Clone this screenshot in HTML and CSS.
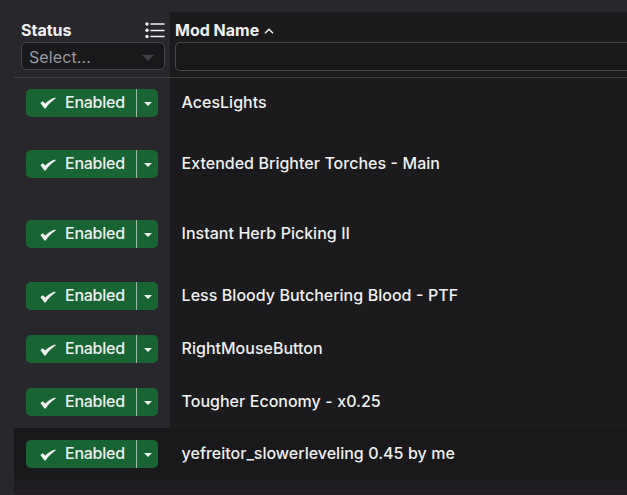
FILE: index.html
```html
<!DOCTYPE html>
<html lang="en">
<head>
<meta charset="utf-8">
<title>Mods</title>
<link rel="stylesheet" href="styles.css">
</head>
<body>
<svg width="0" height="0" class="sprites">
  <symbol id="check" viewBox="0 0 16 12"><path d="M.4 5.9 2.7 4.3 5.4 6.6C8 4 11.2 1.7 15.1.6L15.7 1.5C11.4 4.2 8.3 7.5 5.7 11.4H4.4Z" fill="currentColor"/></symbol>
  <symbol id="caret" viewBox="0 0 8 4"><path d="M0 0H8L4 4Z" fill="currentColor"/></symbol>
</svg>
<main class="table">
  <header class="head">
    <div class="head-cell status">
      <div class="title"><span>Status</span>
        <svg class="list" viewBox="0 0 20 16"><g fill="currentColor"><circle cx="2" cy="2" r="1.7"/><circle cx="2" cy="8.2" r="1.7"/><circle cx="2" cy="14.4" r="1.7"/></g><path d="M6 2H19M6 8.4H19M6 14.6H19" stroke="currentColor" stroke-width="1.5" stroke-linecap="round"/></svg>
      </div>
      <div class="field"><span>Select...</span><svg class="arrow" viewBox="0 0 12 6"><path d="M0 0H12L6 6Z" fill="currentColor"/></svg></div>
    </div>
    <div class="head-cell name">
      <div class="title"><span>Mod Name</span><svg class="sort" viewBox="0 0 10 6"><path d="M1 5.3 5 1.3 9 5.3" fill="none" stroke="currentColor" stroke-width="1.5"/></svg></div>
      <div class="field open"></div>
    </div>
  </header>
  <div class="row first"><div class="status"><div class="btn"><span class="main"><svg class="check"><use href="#check"/></svg>Enabled</span><span class="drop"><svg class="caret"><use href="#caret"/></svg></span></div></div><div class="name">AcesLights</div></div>
  <div class="row tall"><div class="status"><div class="btn"><span class="main"><svg class="check"><use href="#check"/></svg>Enabled</span><span class="drop"><svg class="caret"><use href="#caret"/></svg></span></div></div><div class="name">Extended Brighter Torches - Main</div></div>
  <div class="row tall"><div class="status"><div class="btn"><span class="main"><svg class="check"><use href="#check"/></svg>Enabled</span><span class="drop"><svg class="caret"><use href="#caret"/></svg></span></div></div><div class="name">Instant Herb Picking II</div></div>
  <div class="row"><div class="status"><div class="btn"><span class="main"><svg class="check"><use href="#check"/></svg>Enabled</span><span class="drop"><svg class="caret"><use href="#caret"/></svg></span></div></div><div class="name">Less Bloody Butchering Blood - PTF</div></div>
  <div class="row"><div class="status"><div class="btn"><span class="main"><svg class="check"><use href="#check"/></svg>Enabled</span><span class="drop"><svg class="caret"><use href="#caret"/></svg></span></div></div><div class="name">RightMouseButton</div></div>
  <div class="row"><div class="status"><div class="btn"><span class="main"><svg class="check"><use href="#check"/></svg>Enabled</span><span class="drop"><svg class="caret"><use href="#caret"/></svg></span></div></div><div class="name">Tougher Economy - x0.25</div></div>
  <div class="row short hover"><div class="status"><div class="btn"><span class="main"><svg class="check"><use href="#check"/></svg>Enabled</span><span class="drop"><svg class="caret"><use href="#caret"/></svg></span></div></div><div class="name">yefreitor_slowerleveling 0.45 by me</div></div>
  <div class="rest"></div>
</main>
</body>
</html>
```
FILE: styles.css
```css
* { box-sizing: border-box; }
body {
  margin: 0;
  height: 495px;
  padding: 12px 0 0 14px;
  overflow: hidden;
  background: #28272c;
  color: #f0f0f1;
  font: 500 16px/20px Inter, "Liberation Sans", sans-serif;
}
svg { display: block; flex: none; }
.sprites { position: absolute; }
.head, .row { display: grid; grid-template-columns: 156px 1fr; }
.head { height: 66px; border-bottom: 1px solid #414144; }
.row { height: 53px; }
.row.short, .row.first { height: 51px; }
.row.tall { height: 70px; }
.name { background: #1b1b1d; }
.hover, .hover .name { background: #19191b; }
.head-cell { padding: 8px 5px 0 7px; }
.head-cell.name { padding: 8px 0 0 5px; }
.title { display: flex; align-items: center; height: 21px; padding-bottom: 2px; font-weight: 700; }
.status .title { justify-content: space-between; }
.list { width: 20px; height: 16px; }
.sort { width: 10px; height: 6px; margin: 2px 0 0 5px; }
.field {
  display: flex;
  align-items: center;
  justify-content: space-between;
  height: 28px;
  margin-top: 1px;
  padding: 1px 10px 0 7px;
  border: 1px solid #47474a;
  border-radius: 5px;
  background: #19191b;
  color: #9a99a2;
  font-weight: 400;
  letter-spacing: .1px;
}
.field.open { height: 29px; border-right: 0; border-radius: 5px 0 0 5px; }
.arrow { width: 12px; height: 6px; margin-top: 2px; color: #414047; }
.row .name { display: flex; align-items: center; padding: 0 0 2px 11.6px; word-spacing: .3px; }
.row .status { display: flex; align-items: center; padding-left: 12px; }
.row.first .status { padding-bottom: 2px; }
.row.first .name { padding-bottom: 3px; }
.btn {
  display: flex;
  width: 132px;
  height: 28px;
  border-radius: 5px;
  background: #186432;
}
.main { display: flex; align-items: center; width: 110px; padding: 0 0 1px 14px; letter-spacing: -.25px; }
.row.first .main, .row.tall .main { padding-bottom: 2px; }
.check { width: 16px; height: 12px; margin: 3px 9px 0 0; }
.drop {
  display: flex;
  align-items: center;
  justify-content: center;
  width: 22px;
  padding-top: 2px;
  border-left: 1px solid #9bbda6;
}
.caret { width: 8px; height: 4px; }
.rest { height: 15px; background: #1f1c22; border-bottom: 1px solid #251a24; }
```
